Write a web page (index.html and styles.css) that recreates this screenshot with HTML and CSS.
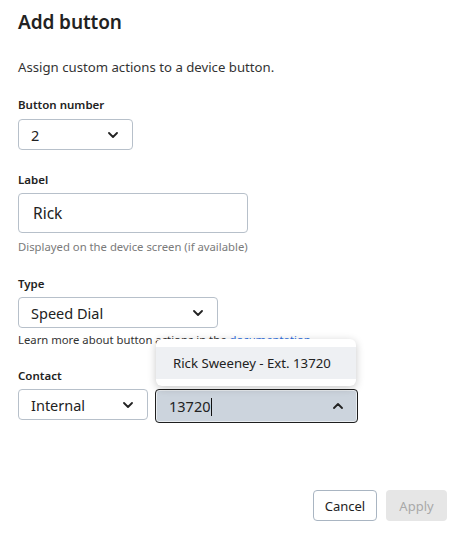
FILE: index.html
```html
<!DOCTYPE html>
<html>
<head>
<meta charset="utf-8">
<link rel="stylesheet" href="styles.css">
</head>
<body>
<div class="page">
  <h1 class="title">Add button</h1>
  <p class="desc">Assign custom actions to a device button.</p>

  <div class="field f-num">
    <div class="label">Button number</div>
    <div class="select w-num"><span>2</span>
      <svg class="chev" viewBox="0 0 10 6" width="10" height="6"><path d="M1 1l4 4 4-4" fill="none" stroke="#222" stroke-width="1.8" stroke-linecap="round" stroke-linejoin="round"/></svg>
    </div>
  </div>

  <div class="field f-label">
    <div class="label">Label</div>
    <div class="input">Rick</div>
    <div class="help">Displayed on the device screen (if available)</div>
  </div>

  <div class="field f-type">
    <div class="label">Type</div>
    <div class="select w-type"><span>Speed Dial</span>
      <svg class="chev" viewBox="0 0 10 6" width="10" height="6"><path d="M1 1l4 4 4-4" fill="none" stroke="#222" stroke-width="1.8" stroke-linecap="round" stroke-linejoin="round"/></svg>
    </div>
    <div class="help dark">Learn more about button actions in the <span class="link">documentation</span>.</div>
  </div>

  <div class="field f-contact">
    <div class="label">Contact</div>
    <div class="row">
      <div class="select w-int"><span>Internal</span>
        <svg class="chev" viewBox="0 0 10 6" width="10" height="6"><path d="M1 1l4 4 4-4" fill="none" stroke="#222" stroke-width="1.8" stroke-linecap="round" stroke-linejoin="round"/></svg>
      </div>
      <div class="combo-wrap">
        <div class="combo"><span class="val">13720<span class="caret"></span></span>
          <svg class="chev" viewBox="0 0 10 6" width="10" height="6"><path d="M1 5l4-4 4 4" fill="none" stroke="#222" stroke-width="1.8" stroke-linecap="round" stroke-linejoin="round"/></svg>
        </div>
        <div class="popup"><div class="option">Rick Sweeney - Ext. 13720</div></div>
      </div>
    </div>
  </div>

  <div class="actions">
    <button class="btn cancel">Cancel</button>
    <button class="btn apply">Apply</button>
  </div>
</div>
</body>
</html>
```
FILE: styles.css
```css
* { box-sizing: border-box; }
html, body { margin: 0; padding: 0; background: #fff; }
body { font-family: "Noto Sans", "Open Sans", sans-serif; color: #222; width: 456px; height: 539px; overflow: hidden; }
.page { padding: 8px 9px 0 18px; position: relative; height: 539px; }
.title { margin: 0; font-size: 19px; font-weight: 600; line-height: 28px; letter-spacing: -0.1px; }
.desc { margin: 22px 0 0; font-size: 13.2px; line-height: 18px; color: #333; }
.field { margin-top: 21px; }
.f-label { margin-top: 22px; }
.f-type { margin-top: 21px; }
.f-contact { margin-top: 20px; }
.label { font-size: 11.5px; font-weight: 600; line-height: 16px; color: #222; margin-bottom: 6px; }
.f-label .label, .f-type .label, .f-contact .label { margin-bottom: 5px; }
.select { height: 31px; border: 1px solid #b7c0ca; border-radius: 4px; display: flex; align-items: center; justify-content: space-between; padding: 0 14px 0 12px; font-size: 14.5px; color: #222; }
.w-num { width: 115px; }
.w-type { width: 200px; }
.w-int { width: 130px; }
.chev { display: block; }
.input { width: 230px; height: 40px; border: 1px solid #b7c0ca; border-radius: 4px; display: flex; align-items: center; padding-left: 14px; font-size: 15.5px; color: #222; }
.help { margin-top: 6px; font-size: 11.3px; line-height: 16px; color: #7a7a7a; }
.help.dark { margin-top: 4px; color: #333; }
.link { color: #2f6fe0; }
.row { display: flex; gap: 7px; align-items: flex-start; }
.combo-wrap { position: relative; }
.combo { width: 203px; height: 34px; background: #ccd4dd; border: 1.5px solid #1e1e1e; box-shadow: inset 0 0 0 1px #e9edf1; border-radius: 4px; display: flex; align-items: center; justify-content: space-between; padding: 0 14px 0 13px; font-size: 14.5px; color: #222; }
.caret { display: inline-block; width: 1px; height: 18px; background: #111; vertical-align: -4px; margin-left: 1px; }
.popup { position: absolute; left: 1px; top: -50px; width: 200px; height: 47px; background: #fff; border-radius: 6px; box-shadow: 0 2px 8px rgba(0,0,0,0.22); padding-top: 8px; }
.option { height: 32px; background: #eef0f3; display: flex; align-items: center; padding-left: 17px; font-size: 13.2px; color: #222; }
.actions { position: absolute; right: 9px; top: 490px; display: flex; gap: 9px; }
.btn { height: 31px; border-radius: 4px; font-family: inherit; font-size: 13px; padding: 0; }
.cancel { width: 64px; background: #fff; border: 1px solid #a9b5c2; color: #222; }
.apply { width: 61px; background: #e6e6e6; border: none; color: #a9a9a9; }
```
